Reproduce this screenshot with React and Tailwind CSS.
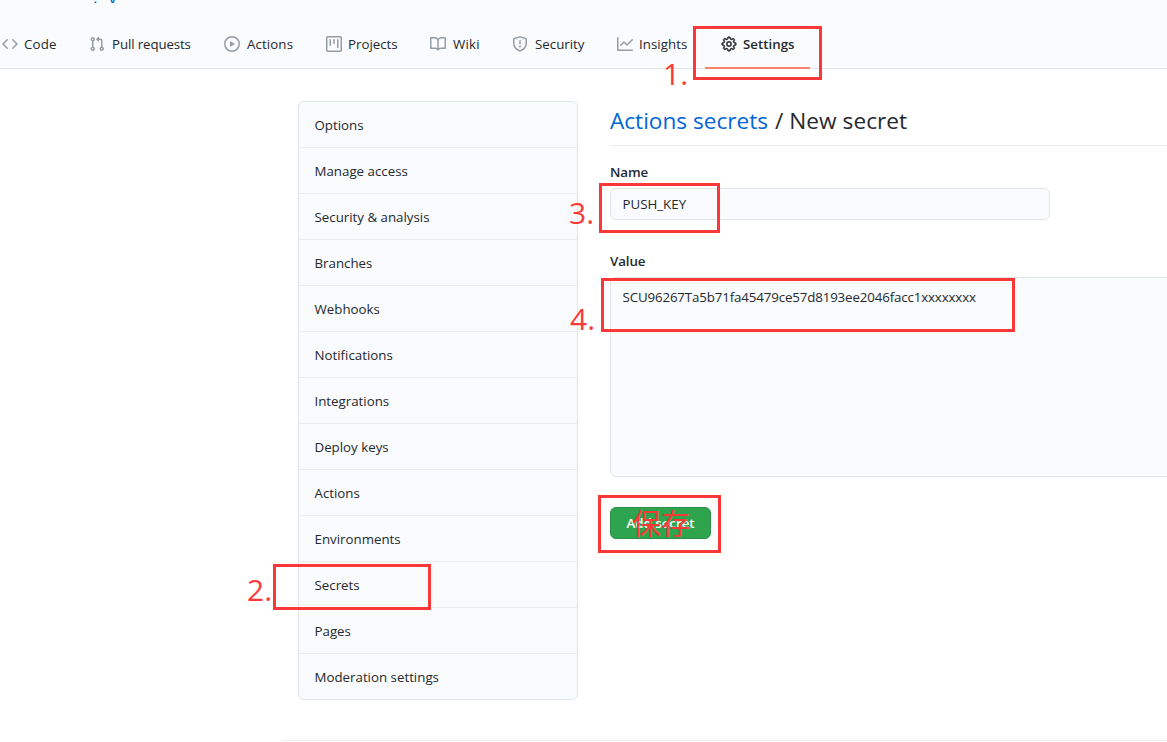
import React from "react";
import { GoGear } from "react-icons/go";

const paths = {
  code: "M4.72 3.22a.75.75 0 011.06 1.06L2.06 8l3.72 3.72a.75.75 0 11-1.06 1.06L.47 8.53a.75.75 0 010-1.06l4.25-4.25zm6.56 0a.75.75 0 10-1.06 1.06L13.94 8l-3.72 3.72a.75.75 0 101.06 1.06l4.25-4.25a.75.75 0 000-1.06l-4.25-4.25z",
  pull: "M7.177 3.073L9.573.677A.25.25 0 0110 .854v4.792a.25.25 0 01-.427.177L7.177 3.427a.25.25 0 010-.354zM3.75 2.5a.75.75 0 100 1.5.75.75 0 000-1.5zm-2.25.75a2.25 2.25 0 113 2.122v5.256a2.251 2.251 0 11-1.5 0V5.372A2.25 2.25 0 011.5 3.25zM11 2.5h-1V4h1a1 1 0 011 1v5.628a2.251 2.251 0 101.5 0V5A2.5 2.5 0 0011 2.5zm1 10.25a.75.75 0 111.5 0 .75.75 0 01-1.5 0zM3.75 12a.75.75 0 100 1.5.75.75 0 000-1.5z",
  play: "M1.5 8a6.5 6.5 0 1113 0 6.5 6.5 0 01-13 0zM8 0a8 8 0 100 16A8 8 0 008 0zM6.379 5.227A.25.25 0 006 5.442v5.117a.25.25 0 00.379.214l4.264-2.559a.25.25 0 000-.428L6.379 5.227z",
  project: "M1.75 0A1.75 1.75 0 000 1.75v12.5C0 15.216.784 16 1.75 16h12.5A1.75 1.75 0 0016 14.25V1.75A1.75 1.75 0 0014.25 0H1.75zM1.5 1.75a.25.25 0 01.25-.25h12.5a.25.25 0 01.25.25v12.5a.25.25 0 01-.25.25H1.75a.25.25 0 01-.25-.25V1.75zM11.75 3a.75.75 0 00-.75.75v7.5a.75.75 0 001.5 0v-7.5a.75.75 0 00-.75-.75zm-8.25.75a.75.75 0 011.5 0v5.5a.75.75 0 01-1.5 0v-5.5zM8 3a.75.75 0 00-.75.75v3.5a.75.75 0 001.5 0v-3.5A.75.75 0 008 3z",
  book: "M0 1.75A.75.75 0 01.75 1h4.253c1.227 0 2.317.59 3 1.501A3.744 3.744 0 0111.006 1h4.245a.75.75 0 01.75.75v10.5a.75.75 0 01-.75.75h-4.507a2.25 2.25 0 00-1.591.659l-.622.621a.75.75 0 01-1.06 0l-.622-.621A2.25 2.25 0 005.258 13H.75a.75.75 0 01-.75-.75V1.75zm8.755 3a2.25 2.25 0 012.25-2.25H14.5v9h-3.757c-.71 0-1.4.201-1.992.572l.004-7.322zm-1.504 7.324l.004-5.073-.002-2.253A2.25 2.25 0 005.003 2.5H1.5v9h3.757a3.75 3.75 0 011.994.574z",
  shield: "M7.467.133a1.75 1.75 0 011.066 0l5.25 1.68A1.75 1.75 0 0115 3.48V7c0 1.566-.32 3.182-1.303 4.682-.983 1.498-2.585 2.813-5.032 3.855a1.7 1.7 0 01-1.33 0c-2.447-1.042-4.049-2.357-5.032-3.855C1.32 10.182 1 8.566 1 7V3.48a1.75 1.75 0 011.217-1.667l5.25-1.68zm.61 1.429a.25.25 0 00-.153 0l-5.25 1.68a.25.25 0 00-.174.238V7c0 1.358.275 2.666 1.057 3.86.784 1.194 2.121 2.34 4.366 3.297a.2.2 0 00.154 0c2.245-.956 3.582-2.104 4.366-3.298C13.225 9.666 13.5 8.36 13.5 7V3.48a.25.25 0 00-.174-.237l-5.25-1.68zM9 10.5a1 1 0 11-2 0 1 1 0 012 0zm-.25-5.75a.75.75 0 10-1.5 0v3a.75.75 0 001.5 0v-3z",
  graph: "M1.5 1.75a.75.75 0 00-1.5 0v12.5c0 .414.336.75.75.75h14.5a.75.75 0 000-1.5H1.5V1.75zm14.28 2.53a.75.75 0 00-1.06-1.06L10 7.94 7.53 5.47a.75.75 0 00-1.06 0L3.22 8.72a.75.75 0 001.06 1.06L7 7.06l2.47 2.47a.75.75 0 001.06 0l5.25-5.25z",
};

const tabs = [
  { label: "Code", icon: "code", cls: "w-[87px] tracking-[0.15px] gap-[6px]" },
  { label: "Pull requests", icon: "pull", cls: "w-[135px] tracking-[-0.12px] gap-[7px]" },
  { label: "Actions", icon: "play", cls: "w-[102px] tracking-[0.1px] gap-[7px]" },
  { label: "Projects", icon: "project", cls: "w-[104px] gap-[6px]" },
  { label: "Wiki", icon: "book", cls: "w-[82px] tracking-[0.2px] gap-[7px]" },
  { label: "Security", icon: "shield", cls: "w-[105px] gap-[7px]" },
  { label: "Insights", icon: "graph", cls: "w-[104px] tracking-[0.05px] gap-[6px]" },
];

const menu = [
  "Options", "Manage access", "Security & analysis", "Branches", "Webhooks",
  "Notifications", "Integrations", "Deploy keys", "Actions", "Environments",
  "Secrets", "Pages", "Moderation settings",
];

function Mark({ box, label, text }) {
  return (
    <>
      <div className={`absolute border-3 border-[#fb3838] ${box}`} />
      <span className={`absolute whitespace-nowrap leading-8 text-[#fb3838] ${label}`}>{text}</span>
    </>
  );
}

export default function App() {
  return (
    <div className="relative h-[742px] w-[1167px] overflow-hidden bg-white font-['Open_Sans','Noto_Sans_CJK_SC',sans-serif] text-[13.3px] leading-5 text-[#24292e]">
      <header className="flex h-[69px] flex-col border-b border-[#e1e4e8] bg-[#fafbfc]">
        <div className="flex h-[3px] items-end overflow-hidden pl-[93px] text-[18px] leading-[12px] text-[#0366d6]">
          <span className="w-[15px]">,</span>
          <span>y</span>
        </div>
        <nav className="-ml-[14px] -mb-px mt-[18px] flex h-12 shrink-0">
          {tabs.map((t) => (
            <a key={t.label} className={`flex shrink-0 items-center whitespace-nowrap pb-0.5 pl-4 ${t.cls}`}>
              <svg className="size-4 shrink-0" viewBox="0 0 16 16" fill="#959da5"><path fillRule="evenodd" d={paths[t.icon]} /></svg>
              {t.label}
            </a>
          ))}
          <a className="flex w-[105px] shrink-0 items-center gap-[6px] border-b-2 border-[#f9826c] pl-4 font-semibold">
            <GoGear className="size-4 shrink-0 stroke-[#24292e] stroke-[0.8]" />
            Settings
          </a>
        </nav>
      </header>

      <main className="flex pl-[298px] pt-8">
        <ul className="w-[280px] shrink-0 overflow-hidden rounded-md border border-[#e1e4e8] bg-[#fafbfc]">
          {menu.map((m) => (
            <li key={m} className="flex h-[46px] items-center border-b border-[#eaecef] px-[15.5px] pt-px last:h-[45px] last:border-b-0">{m}</li>
          ))}
        </ul>
        <section className="ml-8 w-[800px] shrink-0">
          <h2 className="h-[45px] border-b border-[#eaecef] pt-1 text-[22.6px] leading-8 tracking-[0.07px]"><a className="tracking-[0px] text-[#0366d6]">Actions secrets</a><span className="ml-px"> / </span><span>New secret</span></h2>
          <label className="mt-4 block h-[26px] font-semibold leading-[21px] tracking-[-0.1px]">Name</label>
          <div className="flex h-8 w-[440px] items-center rounded-md border border-[#e1e4e8] bg-[#fafbfc] px-[11.5px]">PUSH_KEY</div>
          <label className="mt-[31px] block h-[26px] font-semibold leading-[21px] tracking-[-0.1px]">Value</label>
          <div className="h-[200px] rounded-md border border-[#e1e4e8] bg-[#fafbfc] px-[11.5px] pt-[9px] tracking-[-0.13px]">SCU96267Ta5b71fa45479ce57d8193ee2046facc1xxxxxxxx</div>
          <button className="mt-[30px] flex h-8 w-[101px] items-center justify-center rounded-md border border-[#2a9147] bg-[#2ea44f] font-semibold text-white">Add secret</button>
        </section>
      </main>
      <footer className="ml-[282px] mt-[40px] border-t border-[#eaecef]" />

      <Mark box="left-[693px] top-[26px] h-[54px] w-[129px]" label="left-[663px] top-[58px] text-[30px]" text="1." />
      <Mark box="left-[273px] top-[564px] h-[46px] w-[158px]" label="left-[247px] top-[574px] text-[30px]" text="2." />
      <Mark box="left-[599px] top-[183px] h-[50px] w-[121px]" label="left-[569px] top-[197px] text-[30px]" text="3." />
      <Mark box="left-[601px] top-[278px] h-[54px] w-[414px]" label="left-[570px] top-[303px] text-[30px]" text="4." />
      <Mark box="left-[598px] top-[495px] h-[58px] w-[123px]" label="left-[632px] top-[508px] text-[29px]" text="保存" />
    </div>
  );
}
